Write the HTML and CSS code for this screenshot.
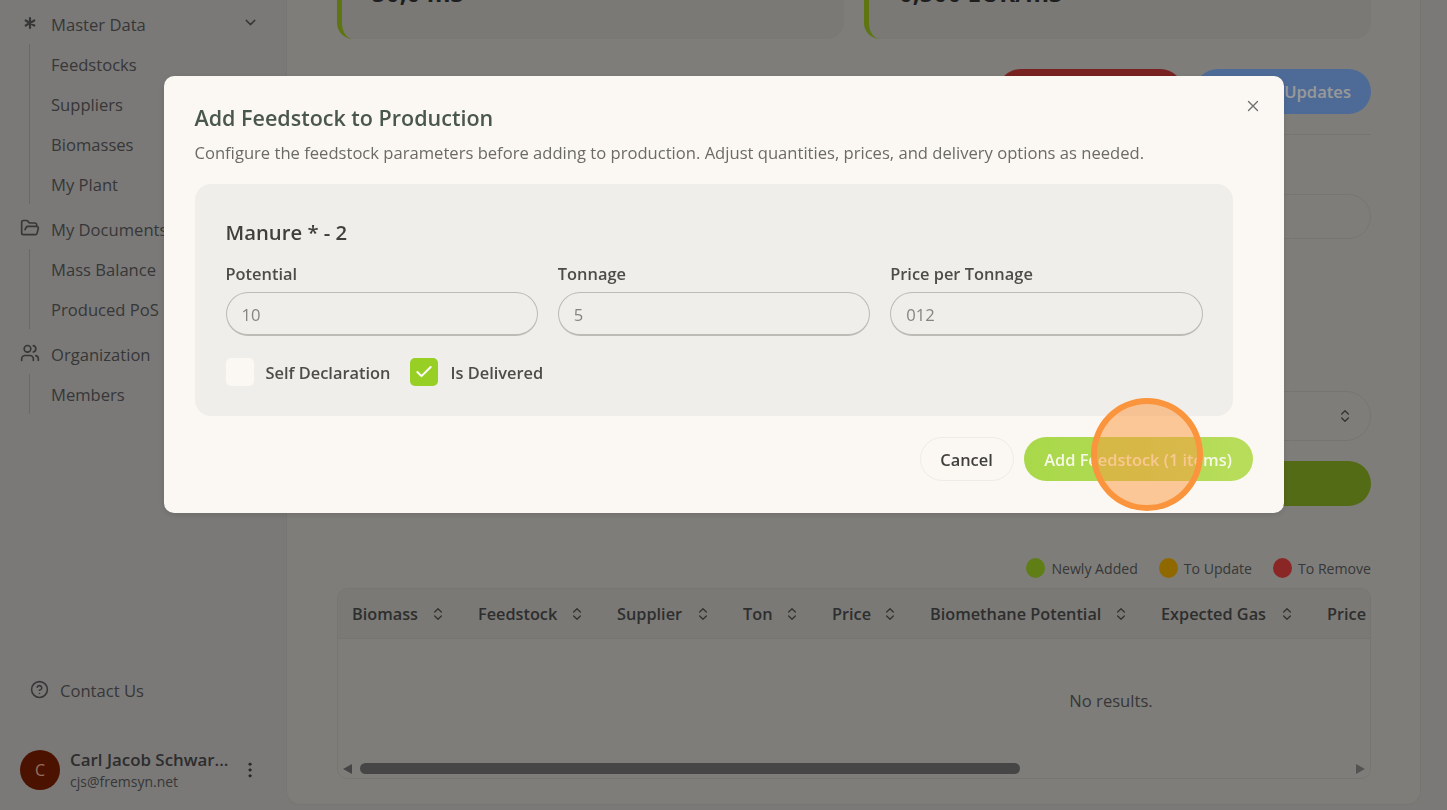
FILE: index.html
```html
<!DOCTYPE html>
<html lang="en">
<head>
<meta charset="utf-8">
<title>Add Feedstock to Production</title>
<link rel="stylesheet" href="styles.css">
</head>
<body>
<div class="app">
  <aside class="sidebar">
    <nav class="nav">
      <div class="nav-group">
        <div class="nav-head">
          <svg class="nav-icon nav-icon-bold" viewBox="0 0 24 24"><path d="M12 6v12M17.2 9 6.8 15M6.8 9l10.4 6"/></svg>
          <span>Master Data</span>
          <svg class="nav-chevron" viewBox="0 0 24 24"><path d="m6 9 6 6 6-6"/></svg>
        </div>
        <ul class="nav-sub">
          <li>Feedstocks</li><li>Suppliers</li><li>Biomasses</li><li>My Plant</li>
        </ul>
      </div>
      <div class="nav-group">
        <div class="nav-head">
          <svg class="nav-icon" viewBox="0 0 24 24"><path d="m6 14 1.5-2.9A2 2 0 0 1 9.24 10H20a2 2 0 0 1 1.94 2.5l-1.54 6a2 2 0 0 1-1.95 1.5H4a2 2 0 0 1-2-2V5a2 2 0 0 1 2-2h3.9a2 2 0 0 1 1.69.9l.81 1.2a2 2 0 0 0 1.67.9H18a2 2 0 0 1 2 2v2"/></svg>
          <span>My Documents</span>
        </div>
        <ul class="nav-sub">
          <li>Mass Balance</li><li>Produced PoS</li>
        </ul>
      </div>
      <div class="nav-group">
        <div class="nav-head">
          <svg class="nav-icon" viewBox="0 0 24 24"><path d="M16 21v-2a4 4 0 0 0-4-4H6a4 4 0 0 0-4 4v2"/><circle cx="9" cy="7" r="4"/><path d="M22 21v-2a4 4 0 0 0-3-3.87M16 3.13a4 4 0 0 1 0 7.75"/></svg>
          <span>Organization</span>
        </div>
        <ul class="nav-sub">
          <li>Members</li>
        </ul>
      </div>
    </nav>
    <div class="sidebar-foot">
      <div class="contact">
        <svg class="contact-icon" viewBox="0 0 24 24"><circle cx="12" cy="12" r="10"/><path d="M9.1 9a3 3 0 0 1 5.8 1c0 2-3 3-3 3M12 17h.01"/></svg>
        <span>Contact Us</span>
      </div>
      <div class="user">
        <div class="avatar">C</div>
        <div class="user-text">
          <div class="user-name">Carl Jacob Schwar...</div>
          <div class="user-mail">cjs@fremsyn.net</div>
        </div>
        <svg class="user-more" viewBox="0 0 24 24"><circle cx="12" cy="5" r="1.4"/><circle cx="12" cy="12" r="1.4"/><circle cx="12" cy="19" r="1.4"/></svg>
      </div>
    </div>
  </aside>

  <main class="main">
    <div class="stats">
      <div class="stat"><strong>50,0 m3</strong></div>
      <div class="stat"><strong>0,500 EUR/m3</strong></div>
    </div>
    <div class="actions">
      <button class="btn btn-red">Discard All</button>
      <button class="btn btn-blue">Save Updates</button>
    </div>
    <hr class="divider">
    <div class="field-text"></div>
    <div class="field-select">
      <svg class="updown" viewBox="0 0 24 24"><path d="m7 15 5 5 5-5M7 9l5-5 5 5"/></svg>
    </div>
    <button class="btn btn-green">Add</button>
    <div class="legend">
      <span class="legend-item"><i class="dot dot-green"></i>Newly Added</span>
      <span class="legend-item"><i class="dot dot-amber"></i>To Update</span>
      <span class="legend-item"><i class="dot dot-red"></i>To Remove</span>
    </div>
    <section class="table">
      <div class="table-scroll">
        <div class="table-inner">
          <div class="thead">
            <div class="th"><span>Biomass</span><svg class="updown" viewBox="0 0 24 24"><path d="m7 15 5 5 5-5M7 9l5-5 5 5"/></svg></div>
            <div class="th"><span>Feedstock</span><svg class="updown" viewBox="0 0 24 24"><path d="m7 15 5 5 5-5M7 9l5-5 5 5"/></svg></div>
            <div class="th"><span>Supplier</span><svg class="updown" viewBox="0 0 24 24"><path d="m7 15 5 5 5-5M7 9l5-5 5 5"/></svg></div>
            <div class="th"><span>Ton</span><svg class="updown" viewBox="0 0 24 24"><path d="m7 15 5 5 5-5M7 9l5-5 5 5"/></svg></div>
            <div class="th"><span>Price</span><svg class="updown" viewBox="0 0 24 24"><path d="m7 15 5 5 5-5M7 9l5-5 5 5"/></svg></div>
            <div class="th"><span>Biomethane Potential</span><svg class="updown" viewBox="0 0 24 24"><path d="m7 15 5 5 5-5M7 9l5-5 5 5"/></svg></div>
            <div class="th"><span>Expected Gas</span><svg class="updown" viewBox="0 0 24 24"><path d="m7 15 5 5 5-5M7 9l5-5 5 5"/></svg></div>
            <div class="th"><span>Price</span></div>
          </div>
          <div class="tbody">No results.</div>
        </div>
      </div>
      <div class="scrollbar">
        <i class="arrow arrow-left"></i>
        <div class="track"><div class="thumb"></div></div>
        <i class="arrow arrow-right"></i>
      </div>
    </section>
  </main>
</div>

<div class="scrim">
  <div class="modal">
    <svg class="modal-close" viewBox="0 0 24 24"><path d="M18 6 6 18M6 6l12 12"/></svg>
    <h2 class="modal-title">Add Feedstock to Production</h2>
    <p class="modal-desc">Configure the feedstock parameters before adding to production. Adjust quantities, prices, and delivery options as needed.</p>
    <div class="panel">
      <h3 class="panel-title">Manure * - 2</h3>
      <div class="fields">
        <label class="field"><span>Potential</span><input class="input" value="10"></label>
        <label class="field"><span>Tonnage</span><input class="input" value="5"></label>
        <label class="field"><span>Price per Tonnage</span><input class="input" value="012"></label>
      </div>
      <div class="checks">
        <div class="check"><span class="box"></span>Self Declaration</div>
        <div class="check">
          <span class="box box-on"><svg viewBox="0 0 24 24"><path d="M20 6 9 17l-5-5"/></svg></span>Is Delivered
        </div>
      </div>
    </div>
    <div class="modal-foot">
      <button class="mbtn mbtn-cancel">Cancel</button>
      <button class="mbtn mbtn-add">Add Feedstock (1 items)</button>
    </div>
  </div>
  <div class="click-marker"></div>
</div>
</body>
</html>
```

FILE: styles.css
```css
* { box-sizing: border-box; }
html, body { height: 100%; }
body {
  margin: 0;
  overflow: hidden;
  background: #cbcac8;
  color: #5c5c5c;
  font-family: "Open Sans", "Noto Sans", "Liberation Sans", sans-serif;
  font-size: 16.6px;
}
svg { fill: none; stroke: currentColor; stroke-width: 2; stroke-linecap: round; stroke-linejoin: round; display: block; flex: none; }
button { font: inherit; border: 0; }

.app { display: flex; height: 810px; overflow: hidden; }

/* sidebar */
.sidebar { width: 286px; flex: none; display: flex; flex-direction: column; justify-content: space-between; padding: 4px 0 20px 20px; }
.nav { display: flex; flex-direction: column; gap: 5px; }
.nav-head { height: 40px; display: flex; align-items: center; padding-right: 27px; }
.nav-head span { flex: 1; white-space: nowrap; margin-left: 11px; }
.nav-icon { width: 20px; height: 20px; margin-top: -2px; }
.nav-icon-bold { stroke-width: 2.6; }
.nav-chevron { width: 17px; height: 17px; margin-top: -3px; }
.nav-sub { list-style: none; margin: 0 0 0 9px; padding: 0 0 0 21px; border-left: 1px solid #a9c25a; }
.nav-sub li { height: 40px; line-height: 41px; }

.sidebar-foot { display: flex; flex-direction: column; gap: 49px; }
.contact { display: flex; align-items: center; gap: 11px; padding-left: 10px; height: 22px; }
.contact-icon { width: 19px; height: 19px; margin-top: -2px; }
.user { display: flex; align-items: center; height: 40px; }
.avatar { width: 40px; height: 40px; border-radius: 50%; background: #7e1f00; color: #f4b9a2; display: flex; align-items: center; justify-content: center; flex: none; font-size: 16px; }
.user-text { margin: 0 0 -1px 10px; width: 170px; }
.user-name { font-size: 16.9px; font-weight: 600; color: #4b4b4b; line-height: 22px; white-space: nowrap; }
.user-mail { font-size: 14px; line-height: 22px; }
.user-more { width: 20px; height: 20px; fill: #444; stroke: #444; stroke-width: 1; }

/* main */
.main { width: 1135px; height: 805px; flex: none; background: #d2d1cc; border-radius: 0 0 14px 14px; border: 1px solid #c5c4bf; border-top: 0; padding: 0 49px 0 50px; display: flex; flex-direction: column; }
.stats { display: grid; grid-template-columns: 1fr 1fr; gap: 20px; height: 100px; margin-top: -61px; flex: none; }
.stat { background: #cbcac5; border-left: 5px solid #9dc41f; border-radius: 16px; padding: 41px 0 0 30px; line-height: 26px; white-space: nowrap; }
.stat strong { font-size: 24.2px; font-weight: 700; color: #333; }
.actions { display: flex; justify-content: flex-end; gap: 12px; margin-top: 30px; flex: none; }
.btn { height: 45px; border-radius: 23px; color: #fff; font-weight: 600; }
.btn-red { width: 185px; background: #cb3939; }
.btn-blue { width: 176px; background: #82b1fa; text-align: right; padding-right: 20px; white-space: nowrap; font-size: 16.6px; }
.divider { width: 100%; height: 1px; margin: 20px 0 0; border: 0; background: #c5c4bf; flex: none; }
.field-text { height: 45px; margin-top: 59px; border: 1px solid #c5c4bf; border-radius: 23px; flex: none; }
.field-select { height: 50px; margin-top: 152px; border: 1px solid #c5c4bf; border-radius: 25px; display: flex; align-items: center; justify-content: flex-end; padding-right: 17px; flex: none; }
.btn-green { height: 45px; margin-top: 20px; background: #8db225; flex: none; width: 100%; }
.updown { width: 16px; height: 20px; color: #555; }

.legend { display: flex; justify-content: flex-end; gap: 21px; margin-top: 52px; height: 20px; font-size: 14.1px; flex: none; }
.legend-item { display: flex; align-items: center; gap: 6px; white-space: nowrap; }
.dot { width: 19px; height: 20px; border-radius: 50%; }
.dot-green { background: #9fd224; }
.dot-amber { background: #f0ae00; }
.dot-red { background: #e84040; }

.table { margin-top: 10px; height: 191px; border: 1px solid #c5c4bf; border-radius: 10px; display: flex; flex-direction: column; overflow: hidden; flex: none; }
.table-scroll { flex: 1; overflow: hidden; }
.table-inner { width: 1546px; }
.thead { display: grid; grid-template-columns: 126px 139px 126px 89px 98px 231px 166px 1fr; padding-left: 14px; height: 50px; align-items: center; background: #cbcac5; border-bottom: 1px solid #c5c4bf; font-size: 16.3px; font-weight: 600; color: #4e4e4e; }
.th { display: flex; align-items: center; justify-content: space-between; padding-right: 32px; white-space: nowrap; }
.tbody { text-align: center; padding-top: 50px; line-height: 24px; }
.scrollbar { height: 11px; margin: 0 5px 4px; display: flex; align-items: center; flex: none; }
.track { flex: 1; height: 11px; margin: 0 6px; }
.thumb { width: 660px; margin-left: 2px; height: 11px; border-radius: 6px; background: #767676; }
.arrow { width: 0; height: 0; border-style: solid; border-color: transparent; }
.arrow-left { border-width: 5.5px 9px 5.5px 0; border-right-color: #767676; }
.arrow-right { border-width: 5.5px 0 5.5px 9px; border-left-color: #8a8a8a; }

/* modal */
.scrim { position: fixed; inset: 0; background: rgba(0, 0, 0, .4); display: flex; justify-content: center; padding-top: 76px; }
.modal { position: relative; width: 1120px; height: 437px; background: #fbf8f3; border-radius: 10px; padding: 26px 31px 0; box-shadow: 0 2px 6px rgba(0,0,0,.12); }
.modal-close { position: absolute; top: 21px; right: 22px; width: 18px; height: 18px; color: #6f6f6c; stroke-width: 1.8; }
.modal-title { margin: 0; font-size: 21.5px; line-height: 32px; font-weight: 600; color: #4a574d; }
.modal-desc { margin: 7px 0 0; line-height: 24px; color: #6b6b66; white-space: nowrap; }
.panel { width: 1038px; height: 232px; margin-top: 19px; padding: 32px 30px 0 31px; background: #f0eeea; border-radius: 16px; }
.panel-title { margin: 0; font-size: 20.3px; line-height: 32px; font-weight: 600; color: #3f3f3c; }
.fields { display: grid; grid-template-columns: repeat(3, 1fr); gap: 20px; margin-top: 16px; }
.field { display: flex; flex-direction: column; gap: 8px; }
.field span { font-size: 16.4px; line-height: 20px; font-weight: 600; color: #4c4c49; }
.input { width: 100%; height: 44px; border: 1px solid #bdbbb6; border-bottom-width: 2px; border-radius: 22px; background: transparent; padding: 1px 15px 0; font: inherit; color: #85857f; outline: 0; }
.checks { display: flex; gap: 20px; margin-top: 22px; }
.check { display: flex; align-items: center; gap: 12px; font-size: 16.4px; font-weight: 600; color: #4c4c49; }
.box { width: 28px; height: 28px; border-radius: 5px; background: #fbf8f3; display: flex; align-items: center; justify-content: center; }
.box-on { background: #97cf25; color: #fff; }
.box-on svg { width: 20px; height: 20px; stroke-width: 2.4; }
.modal-foot { display: flex; justify-content: flex-end; gap: 10px; margin: 21px 0 0; }
.mbtn { height: 44px; border-radius: 22px; font-size: 16.4px; font-weight: 600; }
.mbtn-cancel { width: 94px; background: #fbf8f3; border: 1px solid #efece6; color: #3f3f3c; }
.mbtn-add { width: 229px; background: linear-gradient(90deg, #a9d84a, #b8dd5b); color: #f5f8e4; }
.click-marker { position: absolute; left: 1091px; top: 398px; width: 112px; height: 113px; border-radius: 50%; border: 6px solid #fb953d; background: rgba(253, 150, 60, .5); }
```
